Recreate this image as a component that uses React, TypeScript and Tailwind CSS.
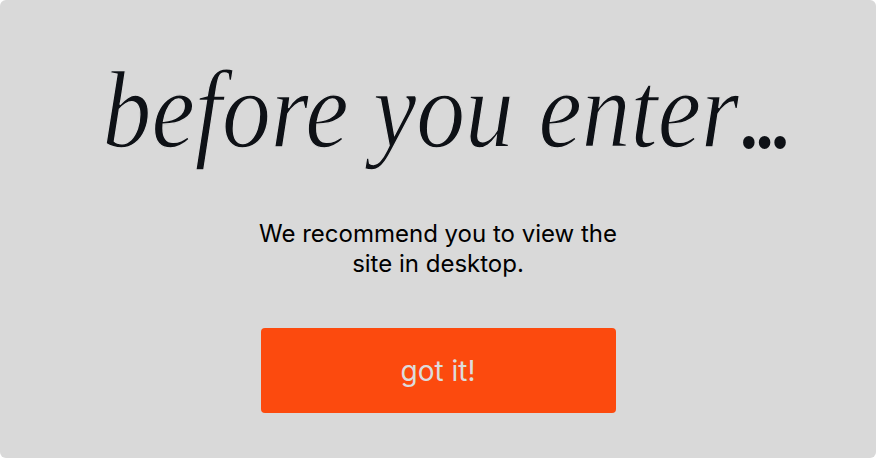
export default function App() {
  return (
    <div className="w-[876px] h-[458px] bg-white">
      <div className="w-full h-full bg-[#d9d9d9] rounded-[6px] flex flex-col items-center">
        <h1 className="mt-[54px] ml-[12px] font-['Liberation_Serif',serif] text-[#0e1116] italic font-normal text-[111px] leading-none whitespace-nowrap scale-x-[0.88]">
          <span className="[-webkit-text-stroke:1.4px_#d9d9d9]">before you enter</span>
          <span className="tracking-[-10px]">...</span>
        </h1>
        <p className="mt-[54px] font-['Inter',sans-serif] text-center text-black text-[24px] leading-[30px] w-[400px]">
          We recommend you to view the
          <br />
          site in desktop.
        </p>
        <button className="mt-[49px] w-[355px] h-[85px] bg-[#fc4a0e] rounded-[4px] font-['Inter',sans-serif] text-[#dcdcdc] text-[28px]">
          got it!
        </button>
      </div>
    </div>
  );
}
